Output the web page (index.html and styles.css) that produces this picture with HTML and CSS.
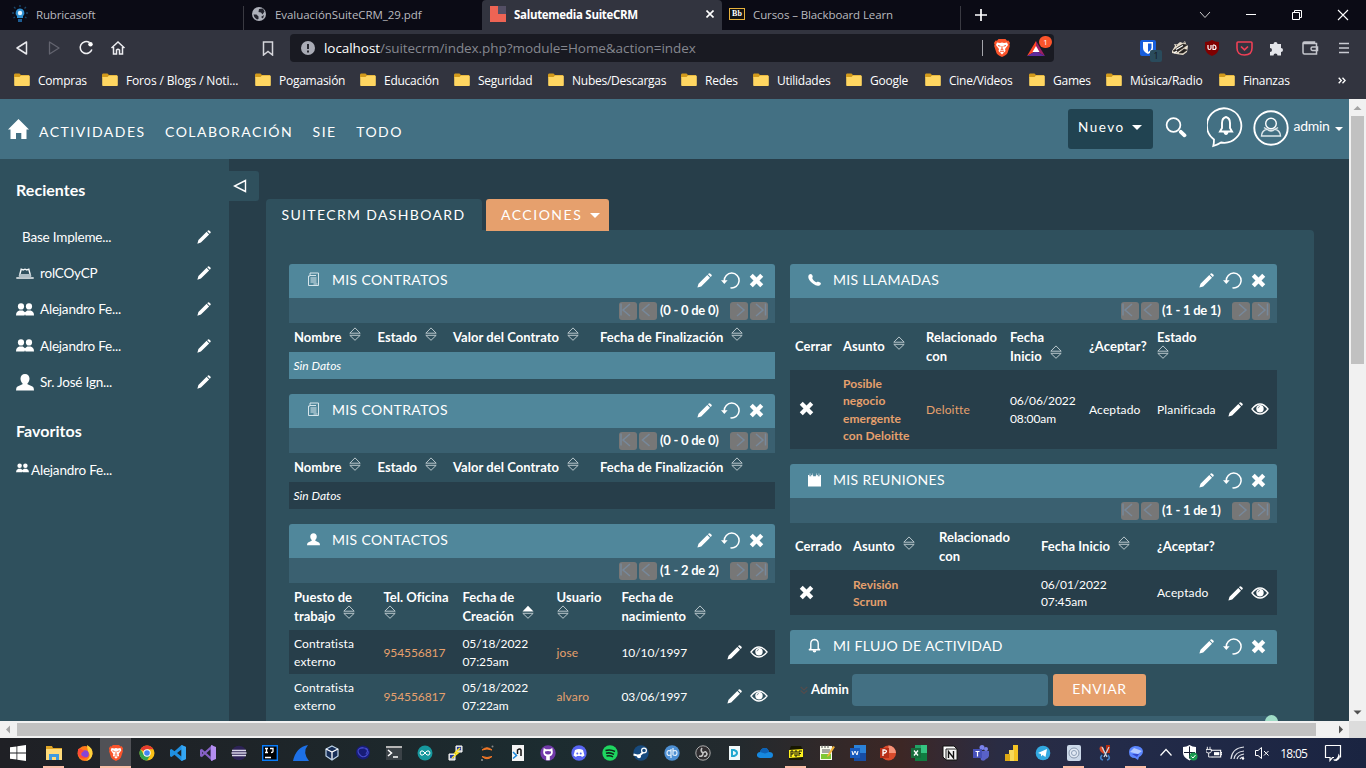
FILE: index.html
```html
<!DOCTYPE html>
<html lang="es">
<head>
<meta charset="utf-8">
<title>Salutemedia SuiteCRM</title>
<link rel="stylesheet" href="styles.css">
</head>
<body>
<svg class="defs" width="0" height="0">
  <symbol id="folder" viewBox="0 0 16 14"><path d="M0 2q0-1.500 1-1.500h4.500L7 2h8v3H0z" fill="#d29a1c"/><path d="M1 4h4.500L7 2.500h8q.8 0 .8.800v8.900q0 .8-.8.800H1q-.8 0-.8-.8V4.800Q.2 4 1 4z" fill="#ffd661"/></symbol>
  <symbol id="pencil" viewBox="0 0 15 15"><path d="M.4 14.600 1.500 10.800 10.300 2l2.700 2.700-8.800 8.800zM11 1.300l.7-.7q.8-.8 1.700.1l.9.900q.9.900.1 1.700l-.7.700z" fill="#fff"/></symbol>
  <symbol id="refresh" viewBox="0 0 19 17"><path d="M3.300 9A7.400 7.400 0 1 1 9.500 15.800" fill="none" stroke="#fff" stroke-width="1.500"/><path d="M0 8.200h6.600L3.300 12z" fill="#fff"/></symbol>
  <symbol id="cross" viewBox="0 0 14 14"><path d="M3.500.7 7 4.200 10.500.7l2.800 2.800L9.800 7l3.500 3.500-2.800 2.800L7 9.800l-3.500 3.500L.7 10.500 4.200 7 .7 3.500z" fill="#fff"/></symbol>
  <symbol id="eye" viewBox="0 0 18 12"><path d="M1 6Q4.800 1 9 1t8 5q-3.800 5-8 5T1 6z" fill="none" stroke="#fff" stroke-width="1.300"/><circle cx="9" cy="5.700" r="3.700" fill="#fff"/><path d="M7 5.300Q7.300 3.500 9 3.500" fill="none" stroke="#273e4a" stroke-width=".5"/></symbol>
  <symbol id="sort" viewBox="0 0 12 14"><path d="M.8 6.200 6 .9l5.200 5.300zM.8 8.300 6 13.300l5.200-5z" fill="none" stroke="#b9c6cb" stroke-width="1"/></symbol>
  <symbol id="sortup" viewBox="0 0 12 14"><path d="M.5 6.500 6 .7l5.500 5.800z" fill="#fff"/><path d="M.8 8.300 6 13.300l5.200-5z" fill="none" stroke="#b9c6cb"/></symbol>
  <symbol id="person" viewBox="0 0 18 17"><path d="M9 0c2.700 0 4.500 1.900 4.500 4.500 0 2-.8 3.800-2 4.800v1l5 2.200q1.500.7 1.500 4.100H0q0-3.400 1.500-4.100l5-2.200v-1C5.300 8.300 4.500 6.500 4.500 4.500 4.500 1.900 6.300 0 9 0z" fill="#fff"/></symbol>
  <symbol id="people" viewBox="0 0 18 13"><circle cx="5" cy="3.400" r="3.100" fill="#fff"/><circle cx="13" cy="3.400" r="3.100" fill="#fff"/><path d="M0 12.500Q0 8.500 3.300 7.600h3.500L9 9.200l2.200-1.600h3.500q3.300.9 3.300 4.900H9.500L9 11.200l-.5 1.300z" fill="#fff"/></symbol>
  <symbol id="hat" viewBox="0 0 18 11"><path d="M.3 10h17.400" stroke="#fff" stroke-width="1.400"/><path d="m3.300 8.500 1.900-7.300 2 .7 1.800-.7 1.800.7 2-.7 1.900 7.300" fill="none" stroke="#f2f6f7" stroke-width="1.400"/><path d="M3.500 6h11l.7 3.500H2.800z" fill="#aebdc4"/></symbol>
  <symbol id="doc" viewBox="0 0 12 15"><path d="M2.500 1H11v12.500H1V4h1.500zM2.500 3.500h6M3 6h6M3 8h6M3 10h6M6 12h4" fill="none" stroke="#d6e5eb" stroke-width="1"/></symbol>
  <symbol id="phone" viewBox="0 0 14 14"><path d="M1 1.300Q3.800-.8 4.800 2.200l.4 1.600Q3.600 5 6.100 7.500T9.800 9.200q.7-.7 1.300-.4l2 1q1.600 1.100 0 2.500-2.900 2.500-7.600-1.200Q-1.600 5.500 1 1.300z" fill="#fff"/></symbol>
  <symbol id="calendar" viewBox="0 0 14 14"><path d="M0 1.500h1.500V3h2V1.500h2V3h3V1.500h2V3h2V1.500H14V14H0z" fill="#fff"/><path d="M2.200 0v2.500M4.800 0v2.500M9.200 0v2.500M11.800 0v2.500" stroke="#dbe7ec" stroke-width=".7"/></symbol>
  <symbol id="bell" viewBox="0 0 14 16"><path d="M3 11.500V6Q3 2 7 1.500 11 2 11 6v5.500l2 1H1z" fill="none" stroke="#fff" stroke-width="1.500"/><path d="M5 13h4q0 2.600-2 2.600T5 13z" fill="#fff"/></symbol>
  <symbol id="first" viewBox="0 0 18 18"><path d="M2 1.500v12M11 2 4 8l7 6" fill="none" stroke="#77899b" stroke-width="1.500"/></symbol>
  <symbol id="prev" viewBox="0 0 18 18"><path d="M10.500 2 3.500 8l7 6" fill="none" stroke="#77899b" stroke-width="1.500"/></symbol>
  <symbol id="next" viewBox="0 0 18 18"><path d="M7 2l7 6-7 6" fill="none" stroke="#77899b" stroke-width="1.500"/></symbol>
  <symbol id="last" viewBox="0 0 18 18"><path d="M15.500 1.500v12M6 2l7 6-7 6" fill="none" stroke="#77899b" stroke-width="1.500"/></symbol>
  <symbol id="lion" viewBox="0 0 16 18"><path d="M4.500 0h7L13 1.700l1.500-.2L16 4l-.6 1.500.4 1.500-2.300 7Q12.700 16 8 18q-4.700-2-5.500-4L.2 7l.4-1.500L0 4l1.500-2.500 1.500.2z" fill="#fb542b"/><path d="M3 3.500 6 4l2-.5 2 .5 3-.5 1 2.500-3 4 .5 2L8 15.500 4.500 12l.5-2-3-4z" fill="#fff"/><path d="M4 6.500l2.500.8M12 6.500l-2.500.8M8 7v3L6.500 11M8 10l1.500 1M6 13l2-1 2 1" stroke="#fb542b" fill="none"/></symbol>
</svg>

<div class="tabstrip">
  <div class="tab t1"><svg width="16" height="18" viewBox="0 0 16 18"><path d="M8 3.500a4.500 4.500 0 0 1 3 7.800V13H5v-1.700A4.500 4.500 0 0 1 8 3.500z" fill="#2f8fd0"/><circle cx="8" cy="8" r="2.200" fill="#e4f4ff"/><path d="M6 14h4v3H6z" fill="#1d5c92"/><path d="M8 0v2M2 2l1.500 1.500M14 2l-1.500 1.500M0 8h2M14 8h2M1.500 13l1.500-1M14.500 13l-1.500-1" stroke="#1a4668" stroke-width="1.300"/></svg><span>Rubricasoft</span></div>
  <div class="tab t2"><svg width="14" height="14" viewBox="0 0 14 14"><circle cx="7" cy="7" r="7" fill="#aeb1ba"/><path d="M1.500 7.500h3l2 2v2.500L5 12.500Q2 11 1.500 7.500zM7 2l4-.5 1.500 3-2 3-1.500-2-2.500-.5zM9 10l3-2-1 3.500z" fill="#22232d"/></svg><span>EvaluaciónSuiteCRM_29.pdf</span></div>
  <div class="tab t3"><svg width="16" height="16" viewBox="0 0 16 16"><path d="M0 0h8v8h8v8H0z" fill="#ee6454"/><path d="M8 0h8v8H8z" fill="#544f65"/></svg><span>Salutemedia SuiteCRM</span><svg class="close" width="8" height="8" viewBox="0 0 8 8"><path d="m.5.500 7 7m0-7-7 7" stroke="#fff" stroke-width="1.600"/></svg></div>
  <div class="tab t4"><b class="bb">Bb</b><span>Cursos – Blackboard Learn</span></div>
  <svg class="plus" width="12" height="12" viewBox="0 0 12 12"><path d="M6 0v12M0 6h12" stroke="#fff" stroke-width="1.700"/></svg>
  <div class="wincontrols">
    <svg width="12" height="12" viewBox="0 0 12 12"><path d="m1 3 5 5.500L11 3" fill="none" stroke="#ccc"/></svg>
    <svg width="12" height="12" viewBox="0 0 12 12"><path d="M1 5.500h10" stroke="#fff"/></svg>
    <svg width="12" height="12" viewBox="0 0 12 12"><path d="M1.500 3.500h7v7h-7zM3.500 3.500v-2h7v7h-2" fill="none" stroke="#fff"/></svg>
    <svg width="12" height="12" viewBox="0 0 12 12"><path d="m1 1 10 10m0-10L1 11" stroke="#fff" stroke-width="1.100"/></svg>
  </div>
</div>

<div class="toolbar">
  <div class="navbtns">
    <svg width="16" height="16" viewBox="0 0 16 16"><path d="M12.500 2v12L3 8z" fill="none" stroke="#e8e8ec" stroke-width="1.500" stroke-linejoin="round"/></svg>
    <svg width="16" height="16" viewBox="0 0 16 16"><path d="M3.500 2v12L13 8z" fill="none" stroke="#63646f" stroke-width="1.300" stroke-linejoin="round"/></svg>
    <svg width="16" height="16" viewBox="0 0 16 16"><path d="M11.500 2.500a6 6 0 1 0 2.400 7" fill="none" stroke="#f0f0f3" stroke-width="1.500"/><circle cx="12.500" cy="4.200" r="2.200" fill="#fff"/></svg>
    <svg width="16" height="16" viewBox="0 0 16 16"><path d="m1.500 8 6.500-6 6.500 6M3.500 7v7h3v-4q1.500-1.500 3 0v4h3V7" fill="none" stroke="#ececf0" stroke-width="1.500"/></svg>
  </div>
  <svg class="bmk" width="12" height="15" viewBox="0 0 12 15"><path d="M1.500 1h9v13L6 10.500 1.500 14z" fill="none" stroke="#d6d6dc" stroke-width="1.500"/></svg>
  <div class="urlbar">
    <svg width="14" height="14" viewBox="0 0 14 14"><circle cx="7" cy="7" r="7" fill="#a9abb5"/><path d="M7 3v5M7 9.500v2" stroke="#191a22" stroke-width="1.800"/></svg>
    <span class="url"><b>localhost</b>/suitecrm/index.php?module=Home&amp;action=index</span>
    <i class="sep"></i>
    <svg class="lion" width="16" height="18"><use href="#lion"/></svg>
    <span class="bat"><svg width="18" height="15" viewBox="0 0 18 15"><path d="M9 0 0 15l9-5z" fill="#ff4724"/><path d="M9 0l9 15-9-5z" fill="#9e1f63"/><path d="M0 15h18l-9-5z" fill="#5d2c9e"/><path d="m9 5 3.500 6h-7z" fill="#fff"/></svg><em>1</em></span>
  </div>
  <div class="exts">
    <span class="bitw"><svg width="16" height="16" viewBox="0 0 16 16"><rect width="16" height="16" rx="2" fill="#175ddc"/><path d="M3 2h10v6q0 3.500-5 6-5-2.500-5-6z" fill="#fff"/><path d="M8 3.500h3.500V8q0 2-3.500 4z" fill="#175ddc"/></svg><em>1</em></span>
    <svg width="18" height="16" viewBox="0 0 18 16"><path d="M1 11 4 6 3 4l3 .5L9 2l3 1 2-2 1 3 2 2-1 6-4 3-7-1-4-1z" fill="#e6dccb"/><path d="m2 11 5-4 5-3 4 1-4 3-6 4zM8 13l5-4 3 1-4 3zM5 5l1 1M13 2l.5 1" fill="#24201e" stroke="#24201e" stroke-width=".6"/><path d="m5 9.500 7-4M3 13l3-2" stroke="#fff" stroke-width="1.200"/></svg>
    <svg width="16" height="16" viewBox="0 0 16 16"><path d="M8 0q3 2 7 2v6q0 5-7 8-7-3-7-8V2q4 0 7-2z" fill="#800000"/><path d="M4 5v3q0 1.500 1.500 1.500T7 8V5M9 5v4.500h1.200Q12 9.500 12 7.500T10.200 5H9" fill="none" stroke="#fff" stroke-width="1.200"/></svg>
    <svg width="17" height="15" viewBox="0 0 17 15"><path d="M2 1h13q1 0 1 1v5q0 7-7.500 7T1 7V2q0-1 1-1z" fill="none" stroke="#ef4056" stroke-width="1.600"/><path d="m5 5.500 3.500 3.300L12 5.500" fill="none" stroke="#ef4056" stroke-width="1.700"/></svg>
    <svg width="15" height="15" viewBox="0 0 15 15"><path d="M1 3h3.500a2 2 0 1 1 4 0H12v4a2 2 0 1 1 0 4v3.500H8.500a2 2 0 1 0-4 0H1V11a2 2 0 1 0 0-4z" fill="#e4e5ea"/></svg>
    <svg width="17" height="14" viewBox="0 0 17 14"><path d="M1 2.500h13.500v10.500H2.500Q1 13 1 11.500zM1 2.500Q1 1 2.500 1h10v1.500M15.500 6h-5q-1.500 0-1.500 1.700t1.500 1.800h5z" fill="none" stroke="#c5c6cd" stroke-width="1.500"/></svg>
    <svg width="12" height="14" viewBox="0 0 12 14"><path d="M1 2.500h10M1 7h10M1 11.500h10" stroke="#c9cad2" stroke-width="1.700"/></svg>
  </div>
</div>

<div class="bookmarks">
  <div><svg><use href="#folder"/></svg>Compras</div><div><svg><use href="#folder"/></svg><span class="wide">Foros / Blogs / Noti...</span></div><div><svg><use href="#folder"/></svg>Pogamasión</div><div><svg><use href="#folder"/></svg>Educación</div><div><svg><use href="#folder"/></svg>Seguridad</div><div><svg><use href="#folder"/></svg>Nubes/Descargas</div><div><svg><use href="#folder"/></svg>Redes</div><div><svg><use href="#folder"/></svg>Utilidades</div><div><svg><use href="#folder"/></svg>Google</div><div><svg><use href="#folder"/></svg>Cine/Videos</div><div><svg><use href="#folder"/></svg>Games</div><div><svg><use href="#folder"/></svg>Música/Radio</div><div><svg><use href="#folder"/></svg>Finanzas</div>
  <b class="more"><svg width="8" height="7" viewBox="0 0 8 7"><path d="m.7.700 2.600 2.800L.7 6.300M4.500.7l2.600 2.800-2.600 2.800" fill="none" stroke="#fff" stroke-width="1.300"/></svg></b>
</div>

<div class="viewport">
  <div class="app">
    <header class="topbar">
      <svg class="home" width="21" height="20" viewBox="0 0 21 20"><path d="M10.500 0 21 10.500h-2.500V20h-5.200v-6H8v6H2.500v-9.500H0z" fill="#fff"/></svg>
      <nav><a>ACTIVIDADES</a><a>COLABORACIÓN</a><a>SIE</a><a>TODO</a></nav>
      <button class="nuevo">Nuevo<i class="caret"></i></button>
      <svg class="search" width="22" height="21" viewBox="0 0 22 21"><circle cx="8.500" cy="8" r="6.900" fill="none" stroke="#fff" stroke-width="1.700"/><path d="m15.800 14.800 3.700 3.500" stroke="#fff" stroke-width="3.800" stroke-linecap="round"/></svg>
      <svg class="notif" width="38" height="42" viewBox="0 0 38 42"><path d="M7 33.500A17.200 17.200 0 1 1 14 36.500Q11 38.500 6.300 40 7 37 7 33.500z" fill="none" stroke="#fff" stroke-width="1.800"/><path d="M13 25.500h12l-2-3.500v-5q0-5-4-6-4 1-4 6v5z" fill="none" stroke="#fff" stroke-width="1.900"/><path d="M16.500 26h5q-.5 3-2.500 3t-2.500-3z" fill="#fff"/></svg>
      <svg class="avatar" width="36" height="36" viewBox="0 0 36 36"><circle cx="18" cy="18" r="16.700" fill="none" stroke="#fff" stroke-width="1.900"/><circle cx="18" cy="13.500" r="5.300" fill="none" stroke="#fff" stroke-width="1.400"/><path d="M8.500 26q0-5 5.500-7 4 4 8 0 5.500 2 5.500 7zM11 17.500q7 6 14 0" fill="none" stroke="#dce6ea" stroke-width="1.400"/></svg>
      <span class="user">admin<i class="caret sm"></i></span>
    </header>
    <div class="body">
      <aside class="side">
        <h2>Recientes</h2>
        <ul>
          <li class="noicon"><span>Base Impleme...</span><svg class="pen"><use href="#pencil"/></svg></li>
          <li><svg width="18" height="11"><use href="#hat"/></svg><span>rolCOyCP</span><svg class="pen"><use href="#pencil"/></svg></li>
          <li><svg width="18" height="13"><use href="#people"/></svg><span>Alejandro Fe...</span><svg class="pen"><use href="#pencil"/></svg></li>
          <li><svg width="18" height="13"><use href="#people"/></svg><span>Alejandro Fe...</span><svg class="pen"><use href="#pencil"/></svg></li>
          <li><svg width="18" height="17"><use href="#person"/></svg><span>Sr. José Ign...</span><svg class="pen"><use href="#pencil"/></svg></li>
        </ul>
        <h2 class="fav">Favoritos</h2>
        <div class="favitem"><svg width="13" height="10"><use href="#people"/></svg><span>Alejandro Fe...</span></div>
      </aside>
      <div class="toggle"><svg width="14" height="14" viewBox="0 0 14 14"><path d="M12.500 1.500v11L1.500 7z" fill="none" stroke="#fff" stroke-width="1.400"/></svg></div>
      <main>
        <div class="dtabs"><span class="dtab">SUITECRM DASHBOARD</span><span class="acc">ACCIONES<i class="caret"></i></span></div>
        <div class="panel">
          <div class="col">
            <section class="dash">
              <h3><svg class="ic" width="12" height="15"><use href="#doc"/></svg><span>MIS CONTRATOS</span><svg class="p"><use href="#pencil"/></svg><svg class="r"><use href="#refresh"/></svg><svg class="x"><use href="#cross"/></svg></h3>
              <div class="pag"><i><svg><use href="#first"/></svg></i><i><svg><use href="#prev"/></svg></i><b>(0 - 0 de 0)</b><i><svg><use href="#next"/></svg></i><i><svg><use href="#last"/></svg></i></div>
              <div class="row head c1"><div>Nombre<svg class="so"><use href="#sort"/></svg></div><div>Estado<svg class="so"><use href="#sort"/></svg></div><div>Valor del Contrato<svg class="so"><use href="#sort"/></svg></div><div>Fecha de Finalización<svg class="so"><use href="#sort"/></svg></div></div>
              <div class="empty hl">Sin Datos</div>
            </section>
            <section class="dash">
              <h3><svg class="ic" width="12" height="15"><use href="#doc"/></svg><span>MIS CONTRATOS</span><svg class="p"><use href="#pencil"/></svg><svg class="r"><use href="#refresh"/></svg><svg class="x"><use href="#cross"/></svg></h3>
              <div class="pag"><i><svg><use href="#first"/></svg></i><i><svg><use href="#prev"/></svg></i><b>(0 - 0 de 0)</b><i><svg><use href="#next"/></svg></i><i><svg><use href="#last"/></svg></i></div>
              <div class="row head c1"><div>Nombre<svg class="so"><use href="#sort"/></svg></div><div>Estado<svg class="so"><use href="#sort"/></svg></div><div>Valor del Contrato<svg class="so"><use href="#sort"/></svg></div><div>Fecha de Finalización<svg class="so"><use href="#sort"/></svg></div></div>
              <div class="empty">Sin Datos</div>
            </section>
            <section class="dash">
              <h3><svg class="ic" width="13" height="13"><use href="#person"/></svg><span>MIS CONTACTOS</span><svg class="p"><use href="#pencil"/></svg><svg class="r"><use href="#refresh"/></svg><svg class="x"><use href="#cross"/></svg></h3>
              <div class="pag"><i><svg><use href="#first"/></svg></i><i><svg><use href="#prev"/></svg></i><b>(1 - 2 de 2)</b><i><svg><use href="#next"/></svg></i><i><svg><use href="#last"/></svg></i></div>
              <div class="row head two c2"><div>Puesto de<br>trabajo<svg class="so"><use href="#sort"/></svg></div><div>Tel. Oficina<br><svg class="so nl"><use href="#sort"/></svg></div><div>Fecha de<br>Creación<svg class="so"><use href="#sortup"/></svg></div><div>Usuario<br><svg class="so nl"><use href="#sort"/></svg></div><div>Fecha de<br>nacimiento<svg class="so"><use href="#sort"/></svg></div></div>
              <div class="row data dark c2"><div>Contratista<br>externo</div><div class="lk num">954556817</div><div class="num">05/18/2022<br>07:25am</div><div class="lk">jose</div><div class="num">10/10/1997</div><div class="act"><svg class="p"><use href="#pencil"/></svg><svg class="e"><use href="#eye"/></svg></div></div>
              <div class="row data c2"><div>Contratista<br>externo</div><div class="lk num">954556817</div><div class="num">05/18/2022<br>07:22am</div><div class="lk">alvaro</div><div class="num">03/06/1997</div><div class="act"><svg class="p"><use href="#pencil"/></svg><svg class="e"><use href="#eye"/></svg></div></div>
            </section>
          </div>
          <div class="col">
            <section class="dash">
              <h3><svg class="ic" width="14" height="14"><use href="#phone"/></svg><span>MIS LLAMADAS</span><svg class="p"><use href="#pencil"/></svg><svg class="r"><use href="#refresh"/></svg><svg class="x"><use href="#cross"/></svg></h3>
              <div class="pag"><i><svg><use href="#first"/></svg></i><i><svg><use href="#prev"/></svg></i><b>(1 - 1 de 1)</b><i><svg><use href="#next"/></svg></i><i><svg><use href="#last"/></svg></i></div>
              <div class="row head two c3"><div>Cerrar</div><div>Asunto<svg class="so"><use href="#sort"/></svg></div><div>Relacionado<br>con</div><div>Fecha<br>Inicio<svg class="so"><use href="#sort"/></svg></div><div>¿Aceptar?</div><div>Estado<br><svg class="so nl"><use href="#sort"/></svg></div></div>
              <div class="row data dark tall c3"><div><svg class="xx"><use href="#cross"/></svg></div><div class="lk bold">Posible<br>negocio<br>emergente<br>con Deloitte</div><div class="lk">Deloitte</div><div class="num">06/06/2022<br>08:00am</div><div>Aceptado</div><div>Planificada</div><div class="act"><svg class="p"><use href="#pencil"/></svg><svg class="e"><use href="#eye"/></svg></div></div>
            </section>
            <section class="dash">
              <h3><svg class="ic" width="14" height="14"><use href="#calendar"/></svg><span>MIS REUNIONES</span><svg class="p"><use href="#pencil"/></svg><svg class="r"><use href="#refresh"/></svg><svg class="x"><use href="#cross"/></svg></h3>
              <div class="pag"><i><svg><use href="#first"/></svg></i><i><svg><use href="#prev"/></svg></i><b>(1 - 1 de 1)</b><i><svg><use href="#next"/></svg></i><i><svg><use href="#last"/></svg></i></div>
              <div class="row head two c4"><div>Cerrado</div><div>Asunto<svg class="so"><use href="#sort"/></svg></div><div>Relacionado<br>con</div><div>Fecha Inicio<svg class="so"><use href="#sort"/></svg></div><div>¿Aceptar?</div></div>
              <div class="row data dark mid c4"><div><svg class="xx"><use href="#cross"/></svg></div><div class="lk semi">Revisión<br>Scrum</div><div></div><div class="num">06/01/2022<br>07:45am</div><div>Aceptado</div><div class="act"><svg class="p"><use href="#pencil"/></svg><svg class="e"><use href="#eye"/></svg></div></div>
            </section>
            <section class="dash">
              <h3><svg class="ic" width="13" height="15"><use href="#bell"/></svg><span>MI FLUJO DE ACTIVIDAD</span><svg class="p"><use href="#pencil"/></svg><svg class="r"><use href="#refresh"/></svg><svg class="x"><use href="#cross"/></svg></h3>
              <div class="post"><svg width="8" height="9" viewBox="0 0 8 9"><path d="m.7 1 3.300 3 3.300-3M.7 4.500l3.300 3 3.300-3" fill="none" stroke="#534c4d" stroke-width="1.200"/></svg><b>Admin</b><span class="input"></span><button>ENVIAR</button></div>
              <div class="pag cut"><i></i><i></i><b></b><i></i><i></i></div>
            </section>
          </div>
        </div>
        <i class="bubble"></i>
      </main>
    </div>
  </div>
  <div class="vscroll"><svg width="17" height="17" viewBox="0 0 17 17"><path d="M4.500 11h8l-4-4z" fill="#a3a3a3"/></svg><i></i><svg class="dn" width="17" height="17" viewBox="0 0 17 17"><path d="M4.500 6.500h8l-4 4z" fill="#505050"/></svg></div>
</div>
<div class="hscroll"><svg width="17" height="17" viewBox="0 0 17 17"><path d="M10 4.500v8l-4-4z" fill="#a3a3a3"/></svg><i></i><svg class="rt" width="17" height="17" viewBox="0 0 17 17"><path d="M7 4.500v8l4-4z" fill="#505050"/></svg></div>

<div class="taskbar">
  <span class="start"><svg viewBox="0 0 16 16"><path d="m0 2.300 6.500-.9v6.200H0zM7.300 1.300 16 0v7.600H7.300zM0 8.400h6.500v6.200L0 13.700zM7.300 8.400H16V16l-8.700-1.200z" fill="#fff"/></svg></span>
  <span class="open"><svg viewBox="0 0 16 16"><path d="M0 1h6l1 2h9v4H0z" fill="#e0a526"/><path d="M0 4h16v11H0z" fill="#ffdb7a"/><path d="M3 15V9h10v6h-3v-3H6v3z" fill="#3f9be0"/></svg></span>
  <span><svg viewBox="0 0 16 16"><circle cx="8" cy="8.500" r="7.500" fill="#ff7a1a"/><path d="M10 0q6 3 5.500 9-1 6-7 7 5-3 4-7-2-2-2.500-9z" fill="#ffd33c"/><circle cx="8" cy="9" r="3.800" fill="#8544d9"/><path d="M1 4q3-1 6 2L3 9q3 4 7 3-5 4-9-2z" fill="#ff4a38"/></svg></span>
  <span class="open active"><svg viewBox="0 0 16 18"><use href="#lion"/></svg></span>
  <span><svg viewBox="0 0 16 16"><circle cx="8" cy="8" r="7.500" fill="#fbc116"/><path d="M8 8 1.500 4.200A7.500 7.500 0 0 1 14.500 4.300H8z" fill="#e63b2e"/><path d="M1.500 4.200A7.500 7.500 0 0 0 8 15.500l3-5L5 10z" fill="#32a350"/><circle cx="8" cy="8" r="3.700" fill="#fff"/><circle cx="8" cy="8" r="2.800" fill="#4285f4"/></svg></span>
  <span><svg viewBox="0 0 16 16"><path d="M11.500 0 16 2v12l-4.500 2L4.500 9.700 1.500 12 0 11.200v-6.400L1.500 4l3 2.300zM11.500 4.500 7 8l4.500 3.500z" fill="#1f8fe0" fill-rule="evenodd"/><path d="M11.500 0 16 2v12l-4.500 2z" fill="#34a6f3"/></svg></span>
  <span><svg viewBox="0 0 16 16"><path d="M1 4.500v7M1 4.500l10.500 9.500V2L1 11.500" fill="none" stroke="#8661c5" stroke-width="2.200"/><path d="m11 0 5 2v12l-5 2z" fill="#b48ef0"/></svg></span>
  <span><svg viewBox="0 0 16 16"><circle cx="8" cy="8" r="7.300" fill="#2c2255"/><path d="M1 5.500h14M.5 8h15M1 10.500h14" stroke="#d9d6e8" stroke-width="1.300"/></svg></span>
  <span><svg viewBox="0 0 16 16"><path d="M.7.700h14.600v14.600H.7z" fill="#000" stroke="#087cfa" stroke-width="1.400"/><path d="M3 3.500h3M4.500 3.500v4M3 7.500h3M8 3.500h3v3q0 1-2 1M3 12.500h6" fill="none" stroke="#fff" stroke-width="1.300"/></svg></span>
  <span><svg viewBox="0 0 16 16"><path d="M0 16Q3 2 15 0q-6 7 1 16z" fill="#1d70e6"/></svg></span>
  <span><svg viewBox="0 0 16 16"><path d="m8 1 6 3v7l-6 4-6-4V4z" fill="#182f58" stroke="#bed4ea" stroke-width="1.200"/><path d="m2 4 6 3 6-3M8 7v7" fill="none" stroke="#fff" stroke-width="1.300"/></svg></span>
  <span><svg viewBox="0 0 16 16"><circle cx="8" cy="7.500" r="7" fill="#171c76"/><path d="M4 4q3-3 7 0t1 6-6 1-3-5 6-3 2 6" fill="none" stroke="#4349c7" stroke-width="1.100"/></svg></span>
  <span><svg viewBox="0 0 16 16"><path d="M0 1h16v14H0z" fill="#3b4247"/><path d="M0 1h16v2H0z" fill="#b6b6b6"/><path d="m2 5 3.500 3L2 11M7 12h5" fill="none" stroke="#fff" stroke-width="1.500"/></svg></span>
  <span><svg viewBox="0 0 16 16"><circle cx="8" cy="8" r="7.500" fill="#16979d"/><path d="M8 8q-2-3-4-2-2 2 0 4 2 1 4-2t4-2q2 2 0 4-2 1-4-2z" fill="none" stroke="#fff"/></svg></span>
  <span><svg viewBox="0 0 16 16"><path d="M8 1h6v6H8zM1 9h6v6H1z" fill="#b4b8c0" stroke="#fff"/><path d="M9 2h4v3H9zM2 10h4v3H2z" fill="#223ba5"/><path d="m12 3-5 5h3l-6 5" fill="none" stroke="#ffe521" stroke-width="1.500"/></svg></span>
  <span><svg viewBox="0 0 16 16"><path d="M3 5q5-4.500 10 0-5-2-10 0zM3 11.500q5 4.500 10 0-5 2-10 0z" fill="#f37726" stroke="#f37726"/><circle cx="13.500" cy="1.500" r="1" fill="#888"/><circle cx="3" cy="15" r="1" fill="#999"/><circle cx="3" cy="2" r=".6" fill="#888"/></svg></span>
  <span><svg viewBox="0 0 16 16"><path d="M2 0h12v16H2z" fill="#f4f4f4"/><path d="M7.500 9V5q2.500-2 3.500 0v6" fill="none" stroke="#111" stroke-width="1.500"/><path d="m3 7 3.500 3.500-3.500 3" fill="none" stroke="#1684d8" stroke-width="1.500"/></svg></span>
  <span><svg viewBox="0 0 16 16"><circle cx="8" cy="8" r="7.700" fill="#713aaa"/><path d="M3.700 3 6 4.300h4L12.300 3l.5 4q0 3.500-3 4.200v4H6.200v-4q-3-.7-3-4.200z" fill="#fff"/><path d="M5 6.500q3-1 6 0 .5 3-3 3t-3-3z" fill="#713aaa"/></svg></span>
  <span><svg viewBox="0 0 16 16"><circle cx="8" cy="8" r="7.700" fill="#5865f2"/><path d="M4 5q4-2 8 0l1.500 5.500L11 12l-1-1H6l-1 1-2.500-1.500z" fill="#fff"/><circle cx="6.300" cy="8.400" r="1" fill="#5865f2"/><circle cx="9.700" cy="8.400" r="1" fill="#5865f2"/></svg></span>
  <span><svg viewBox="0 0 16 16"><circle cx="8" cy="8" r="7.700" fill="#1ed760"/><path d="M3.500 5.500q5-1.500 9.500 1M4 8.300q4-1.200 8 1M4.500 11q3.500-1 6.500.8" fill="none" stroke="#10261a" stroke-width="1.500"/></svg></span>
  <span><svg viewBox="0 0 16 16"><circle cx="8" cy="8" r="7.700" fill="#174a7e"/><path d="M.5 9.500 6 11l5-4.500" stroke="#fff" stroke-width="2" fill="none"/><circle cx="11" cy="5.500" r="2.400" fill="#174a7e" stroke="#fff" stroke-width="1.200"/><circle cx="6" cy="11.300" r="2" fill="#fff"/></svg></span>
  <span><svg viewBox="0 0 16 16"><circle cx="8" cy="8" r="7.700" fill="#4d8fd3"/><path d="M7 4v9M7 6Q3 4.500 3 8t4 2M9 3v7M9 6q4-1.500 4 2t-4 2" fill="none" stroke="#e6f1fc" stroke-width="1.200"/></svg></span>
  <span><svg viewBox="0 0 16 16"><circle cx="8" cy="8" r="7.200" fill="#302e31" stroke="#aaa"/><path d="M7 3q-2 3 1 5 3-3 4 1-1 3-3 2M8 8q0 4-4 3" fill="none" stroke="#c5c5c5" stroke-width="1.600"/></svg></span>
  <span><svg viewBox="0 0 16 16"><path d="M3 1h11v14H3z" fill="#eff8fa"/><path d="M6 5v6h2q3-1 3-3T8 5z" fill="none" stroke="#1fa7cf" stroke-width="2"/></svg></span>
  <span><svg viewBox="0 0 16 16"><path d="M3 13Q-1 12 0 9q1-2 3-2 1-4 5-4 3 0 4 4 4 0 4 3t-3 3z" fill="#1688df"/><path d="M3 7q1-4 5-4 3 0 4 4l-4 1.500z" fill="#0d61b5"/></svg></span>
  <span class="open"><svg viewBox="0 0 16 16"><path d="M3 1h10l2 4v10H1V6z" fill="#171702"/><path d="m1 5 14-1v8L1 13z" fill="#fff21c"/><path d="M3 12V6h2v3H3M7 6v5h2V6H7M11 11V6h3M11 8.500h2" fill="none" stroke="#111"/></svg></span>
  <span><svg viewBox="0 0 16 16"><path d="M1 1h12v14H1z" fill="#f7faee"/><path d="M2 9h10v5H2z" fill="#7dc735"/><path d="M3 0v3M6 0v3M9 0v3M3 5h8M3 7h8" stroke="#555"/><path d="m14 1 2 1-6 9-2 1 .5-2z" fill="#f0b23b"/></svg></span>
  <span><svg viewBox="0 0 16 16"><path d="M4 0h12v16H4z" fill="#2b82d9"/><path d="M4 8h12v8H4z" fill="#174da3"/><path d="M0 3h10v10H0z" fill="#185abd"/><path d="m2 6 1 4 2-4 2 4 1-4" fill="none" stroke="#fff"/></svg></span>
  <span><svg viewBox="0 0 16 16"><circle cx="8.500" cy="8" r="7.500" fill="#d94a2b"/><path d="M8.500.5A7.500 7.500 0 0 1 16 8H8.500z" fill="#f69379"/><path d="M0 3h9v10H0z" fill="#b72f18"/><path d="M3 11V5h2q3 1 0 3H3" fill="none" stroke="#fff" stroke-width="1.300"/></svg></span>
  <span><svg viewBox="0 0 16 16"><path d="M4 0h12v16H4z" fill="#21a366"/><path d="M10 0h6v8h-6z" fill="#35c481"/><path d="M4 8h12v8H4z" fill="#107c41"/><path d="M0 3h10v10H0z" fill="#176c3c"/><path d="m3 5.500 4 5m0-5-4 5" stroke="#fff" stroke-width="1.300"/></svg></span>
  <span><svg viewBox="0 0 16 16"><path d="M1 1h11l3 3v11H4l-3-3z" fill="#fff" stroke="#111"/><path d="M4 4h11v11H4z" fill="#f5f5f5" stroke="#222"/><path d="M6.500 13V6.500l5 6.500V6" fill="none" stroke="#111" stroke-width="1.400"/></svg></span>
  <span><svg viewBox="0 0 16 16"><circle cx="13" cy="4" r="2" fill="#7b83eb"/><circle cx="9" cy="2.500" r="2.500" fill="#7b83eb"/><path d="M6 6h10v5q-1 3-3 3-2 3-5 1z" fill="#5961c7"/><path d="M0 4h9v9H0z" fill="#4650b8"/><path d="M2.500 6.500h4M4.500 6.500v5" stroke="#fff" stroke-width="1.200"/></svg></span>
  <span><svg viewBox="0 0 16 16"><path d="M9 0h5v16H9z" fill="#f3c324"/><path d="M5 5h5v11H5z" fill="#f7d95a"/><path d="M1 9h5v7H1z" fill="#dda914"/></svg></span>
  <span><svg viewBox="0 0 16 16"><circle cx="8" cy="8" r="7.300" fill="#32a8e0"/><path d="m3 8 9-4-1.500 8-3-2-1.500 1.500V9z" fill="#fff"/></svg></span>
  <span class="open"><svg viewBox="0 0 16 16"><rect x="1" width="14" height="16" rx="2" fill="#cbd8e8"/><circle cx="8" cy="8" r="5" fill="#e2eaf4" stroke="#8796ac"/><circle cx="8" cy="8" r="2.500" fill="none" stroke="#8fa0b8"/></svg></span>
  <span><svg viewBox="0 0 16 16"><path d="M4 1q-3 2 0 6l3 2V3z" fill="#d94725"/><path d="M9 0h4v8H9z" fill="#b32e12"/><path d="m5 2 5 10M12 2 7 12" stroke="#d0d6df" stroke-width="1.300"/><path d="M5 10q-3 4 1 5M11 10q3 4-1 5" fill="none" stroke="#4382c8" stroke-width="1.600"/></svg></span>
  <span class="open"><svg viewBox="0 0 16 16"><path d="M1 7q0-5 6-6 7 0 8 5 0 4-4 6l-1 3-3-2q-6 0-6-6z" fill="#5b86ff"/><path d="m2 7 4-4 8 3-4 3z" fill="#b3caff"/><path d="M4 9h7l-2 3z" fill="#3448cc"/></svg></span>
  <div class="tray">
    <svg viewBox="0 0 16 16"><path d="m2.500 10.500 5.500-6 5.500 6" fill="none" stroke="#fff" stroke-width="1.200"/></svg>
    <svg viewBox="0 0 16 16"><path d="M7.500 0q3 2 6.500 2v6q0 4-6.500 7.500Q1 12 1 8V2q3.500 0 6.500-2z" fill="#fff"/><path d="M7.500 1.500v12M2 7.500h11" stroke="#161d32"/><circle cx="11.500" cy="11.500" r="4" fill="#17994e"/><path d="m9.500 11.500 1.500 1.500 2.500-3" fill="none" stroke="#fff"/></svg>
    <svg viewBox="0 0 18 16"><path d="M5.500 5h11v7.500h-10M17 7.500h1v2.500h-1" fill="none" stroke="#fff" stroke-width="1.200"/><path d="M9 7h6v3.500H9z" fill="#fff"/><path d="M1.500 1v3M4.500 1v3M0 4h6v2q0 2-3 2T0 6zM3 8v4.500h4" fill="none" stroke="#fff"/></svg>
    <svg viewBox="0 0 16 16"><path d="M1 14Q2 3 14 2M4 14q1-7 10-8M7 14q1-4 7-5M10 14q1-2 4-2" fill="none" stroke="#dfe1e8" stroke-width="1.200"/><circle cx="13" cy="13.500" r="1.200" fill="#fff"/></svg>
    <svg viewBox="0 0 16 16"><path d="M1.500 5.500H4l3.500-3v11L4 10.500H1.500z" fill="none" stroke="#fff"/><path d="m10 6 4.500 4.500m0-4.500L10 10.500" stroke="#fff"/></svg>
    <span>18:05</span>
    <svg class="nt" viewBox="0 0 18 18"><path d="M1.500 1.500h15v12M10 13.500H8.500L6 16.500v-3H1.500v-12" fill="none" stroke="#fff" stroke-width="1.200"/><path d="M14.500 9.500q3.500 5-2 7.500-3 0-3.500-1.500 5 .500 5.500-6z" fill="#fff"/></svg>
  </div>
</div>
</body>
</html>
```

FILE: styles.css
```css
* { box-sizing: border-box; }
body { margin: 0; width: 1366px; height: 768px; overflow: hidden; background: #32343f; font-family: "Open Sans", "Noto Sans", sans-serif; color: #fff; display: flex; flex-direction: column; }
svg { display: block; flex: none; }
i { display: block; font-style: normal; }
.defs { display: none; }

/* browser chrome */
.tabstrip { height: 30px; flex: none; background: #0b0b15; display: flex; align-items: center; font-size: 11.5px; color: #b9babf; }
.tab { height: 30px; display: flex; align-items: center; gap: 8px; white-space: nowrap; letter-spacing: -0.1px; padding-bottom: 2px; }
.t1 { width: 244px; padding-left: 12px; letter-spacing: -0.15px; border-right: 1px solid #2c2d36; border-image: linear-gradient(transparent 7px, #3a3a42 7px) 1; }
.t2 { width: 238px; padding-left: 8px; gap: 9px; letter-spacing: -0.05px; }
.t3 { width: 240px; padding-left: 8px; background: #32343f; border-radius: 4px 4px 0 0; color: #fff; font-weight: 700; letter-spacing: -0.3px; }
.t3 .close { margin-left: auto; margin-right: 8px; }
.t4 { width: 239px; padding-left: 7px; border-right: 1px solid #2c2d36; border-image: linear-gradient(transparent 7px, #3a3a42 7px) 1; }
.bb { width: 16px; height: 12px; border: 1px solid #e7b13c; background: #111; color: #fff; font: 700 8px/9px "Liberation Serif", serif; text-align: center; letter-spacing: 0; }
.plus { margin-left: 14px; }
.wincontrols { margin-left: auto; display: flex; gap: 34px; padding: 0 17px 1px 0; }
.toolbar { height: 36px; flex: none; display: flex; align-items: center; }
.navbtns { display: flex; gap: 16px; padding-left: 14px; width: 262px; }
.bmk { margin-right: 16px; }
.urlbar { width: 764px; height: 28px; background: #191a22; border-radius: 4px; display: flex; align-items: center; padding-left: 11px; }
.url { margin-left: 9px; font-size: 13.5px; letter-spacing: -0.06px; color: #85878f; white-space: nowrap; }
.url b { font-weight: 400; color: #fff; }
.sep { width: 1px; height: 16px; background: #a5a6ac; margin-left: auto; }
.lion { margin: 0 17px 0 11px; }
.bat { position: relative; margin-right: 9px; }
.bat em { position: absolute; left: 12px; top: -5px; width: 13px; height: 12px; border-radius: 6px; background: #fb542b; font: 8px/12px "Open Sans", sans-serif; text-align: center; }
.exts { margin-left: auto; display: grid; grid-template-columns: repeat(5, 32px) 36px 32px; justify-items: center; align-items: center; margin-right: 6px; }
.bitw { position: relative; }
.bitw em { position: absolute; left: 10px; top: 10px; width: 12px; height: 12px; border-radius: 2px; background: #2a4b5c; color: #14171c; font: 9px/12px "Open Sans", sans-serif; text-align: center; }
.bookmarks { height: 33px; flex: none; display: grid; grid-template-columns: 88px 153px 105px 94px 94px 133px 72px 93px 79px 104px 77px 113px 119px 20px; padding-left: 14px; align-items: center; font-size: 12px; letter-spacing: -0.25px; padding-bottom: 5px; }
.bookmarks div { display: flex; align-items: center; gap: 8px; white-space: nowrap; }
.bookmarks div svg { width: 16px; height: 14px; }
.bookmarks .wide { letter-spacing: -0.15px; }

/* application */
.viewport { height: 622px; flex: none; display: flex; font-family: Lato, sans-serif; }
.app { width: 1349px; height: 622px; overflow: hidden; background: #273e4a; }
.topbar { height: 60px; background: #437083; display: flex; align-items: flex-start; padding-left: 8px; }
.home { margin-top: 20px; }
.topbar nav { display: flex; gap: 19.500px; margin: 24px 0 0 10px; font-size: 14px; line-height: 17px; letter-spacing: 1.470px; width: 1029px; font-weight: 400; }
.nuevo { width: 85px; height: 40px; margin-top: 10px; background: #214351; border: 0; border-radius: 3px; color: #fff; font: 13.500px Lato, sans-serif; letter-spacing: 1.500px; display: flex; align-items: center; padding: 0 0 4px 10px; }
.caret { border: 5px solid transparent; border-top-color: #fff; border-bottom: 0; }
.nuevo .caret { margin-left: 7px; }
.search { margin: 18px 0 0 12px; }
.notif { margin: 7px 0 0 20px; }
.avatar { margin: 10.500px 0 0 7.500px; }
.user { margin: 18px 0 0 5px; font-size: 14px; line-height: 18px; display: flex; align-items: center; letter-spacing: -0.3px; }
.user .caret { border-width: 4.500px; border-bottom: 0; margin: 5px 0 0 5px; }
.body { height: 562px; display: flex; }
.side { width: 229px; flex: none; background: #2f505d; font-size: 13.500px; }
.side h2 { margin: 21px 0 0 16px; font-size: 16px; line-height: 20px; letter-spacing: 0.050px; }
.side ul { list-style: none; margin: 19px 0 0; padding: 0 18px 0 16px; }
.side li { height: 36.400px; display: flex; align-items: center; padding-bottom: 1px; }
.side li span { margin-left: 6px; letter-spacing: -0.2px; }
.side .pen { width: 14px; height: 14px; margin-left: auto; }
.side h2.fav { margin-top: 20px; }
.favitem { display: flex; margin: 20px 0 0 16px; gap: 2px; line-height: 18px; letter-spacing: -0.2px; }
.favitem svg { margin-top: 2px; }
.toggle { width: 30px; height: 30px; flex: none; margin-top: 12px; background: #2f505d; border-radius: 0 3px 3px 0; padding: 8px 0 0 4px; }
main { width: 1048px; margin: 40px 0 0 7px; position: relative; }
.dtabs { height: 32px; display: flex; gap: 4px; font-size: 14px; letter-spacing: 1.350px; line-height: 32px; white-space: nowrap; }
.dtab { width: 216px; padding-left: 15.500px; background: #2f505d; border-radius: 4px 4px 0 0; }
.acc { width: 123px; padding-left: 15px; background: #e6a06d; border-radius: 3px 3px 0 0; display: flex; align-items: center; letter-spacing: 1.500px; }
.acc .caret { margin-left: 8px; }
.panel { height: 520px; margin-top: -1px; background: #2f505d; border-radius: 0 4px 0 0; padding: 34px 37px 0 23px; display: grid; grid-template-columns: 486px 487px; gap: 15px; }
.col { display: flex; flex-direction: column; gap: 15px; }
.dash h3 { height: 34px; margin: 0; background: #50879b; border-radius: 3px 3px 0 0; display: flex; align-items: center; font-size: 14px; font-weight: 400; letter-spacing: 0.350px; padding: 0 11px 2px 18px; }
.dash h3 span { flex: 1; margin-left: 12px; padding-bottom: 1px; }
.dash h3 .ic { width: 13px; margin-bottom: 1px; }
.p { width: 15px; height: 15px; }
.dash h3 .r { width: 19px; height: 17px; margin: 0 9px; }
.x, .xx { width: 15px; height: 15px; }
.pag { height: 25px; background: #3a6070; display: flex; justify-content: flex-end; align-items: center; padding: 1px 7px 0 0; gap: 2px; }
.pag i { width: 18px; height: 18px; background: #777; border-radius: 3px; }
.pag i svg { width: 18px; height: 18px; }
.pag b { font-size: 13px; width: 69px; padding: 0 0 2px 1px; white-space: nowrap; letter-spacing: -0.250px; }
.cut { width: 477px; height: 26px; align-items: center; }
.row { display: grid; align-items: center; padding-left: 5px; }
.head { height: 29px; font-size: 13px; font-weight: 700; line-height: 19px; white-space: nowrap; letter-spacing: 0.040px; }
.head.two { height: 47px; }
.so { display: inline-block; width: 12px; height: 14px; margin: -4px 0 0 8px; vertical-align: 1.500px; overflow: visible; }
.nl { margin-left: 0; }
.data { height: 44px; font-size: 12px; line-height: 17.500px; letter-spacing: 0.150px; padding-top: 1px; }
.num { letter-spacing: -0.100px; }
.dark { background: #273e4a; }
.mid { height: 45px; }
.tall { height: 79px; padding-top: 0; }
.lk { color: #e6a06d; }
.bold, .semi { font-weight: 700; letter-spacing: 0.050px; }
.c1 { grid-template-columns: 83.500px 75.500px 147px 1fr; }
.c2 { grid-template-columns: 89.500px 79px 94px 65px 105px 1fr; }
.c3 { grid-template-columns: 48px 83px 84px 79px 68px 71px 1fr; }
.c4 { grid-template-columns: 58px 86px 102px 116px 71px 1fr; }
.act { display: flex; align-items: center; gap: 8px; }
.act .e { width: 18px; height: 12px; margin-top: -1px; }
.xx { margin-left: 4px; margin-top: -2px; }
.empty { height: 27px; background: #273e4a; padding-left: 4.500px; font-size: 12px; line-height: 27px; font-style: italic; }
.hl { background: #50879b; }
.post { height: 42px; margin-bottom: 10px; padding: 10px 0 0 10px; display: flex; align-items: center; }
.post b { margin-left: 3px; width: 39px; font-size: 13px; padding-bottom: 2px; }
.post .input { width: 196px; height: 32px; margin-left: 2px; background: #437083; border-radius: 4px; }
.post button { width: 93px; height: 32px; margin-left: 5px; padding: 0 0 3px; background: #e6a06d; border: 0; border-radius: 3px; color: #fff; font: 14px Lato, sans-serif; letter-spacing: 0.700px; }
.bubble { position: absolute; left: 999px; top: 516px; width: 13px; height: 13px; border-radius: 50%; background: #9fdcc6; }

/* scrollbars */
.vscroll { width: 17px; background: #f1f1f1; display: flex; flex-direction: column; }
.vscroll i { width: 13px; height: 248px; margin-left: 2px; background: #c1c1c1; }
.vscroll .dn { margin-top: auto; }
.hscroll { height: 17px; flex: none; background: #f1f1f1; display: flex; align-items: center; border-right: 17px solid #dcdcdc; }
.hscroll i { width: 1299px; height: 13px; background: #c1c1c1; }
.hscroll .rt { margin-left: auto; }

/* taskbar */
.taskbar { height: 30px; flex: none; display: flex; background: linear-gradient(90deg, #1f2025 0, #1e2428 18%, #1c2c30 40%, #232a2e 54%, #3d2725 66%, #2a2c43 73%, #232b49 82%, #1a2441 100%); }
.taskbar > span { width: 30.920px; flex: none; display: flex; align-items: center; justify-content: center; }
.taskbar > span svg { width: 16px; height: 16px; }
.taskbar > .start { width: 38.500px; padding-right: 3px; }
.taskbar .open { background: linear-gradient(#fabda6, #fabda6) center bottom / 21px 2px no-repeat; }
.taskbar .active { background: linear-gradient(#fabda6, #fabda6) center bottom / 100% 2px no-repeat #505156; }
.tray { display: flex; align-items: center; padding-left: 7px; font-size: 12px; flex: 1; }
.tray svg { width: 16px; height: 16px; margin-right: 8px; }
.tray span { margin: 0 16px 0 2px; letter-spacing: -0.700px; width: 28px; }
.tray .nt { width: 18px; height: 18px; margin: 0; }
```
